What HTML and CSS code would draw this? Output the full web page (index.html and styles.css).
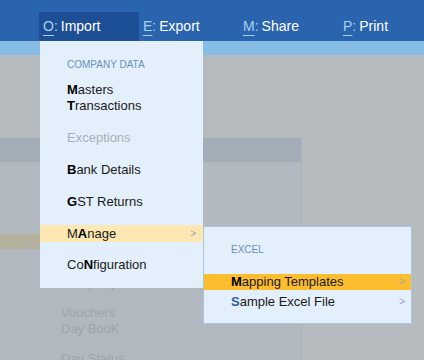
FILE: index.html
```html
<!DOCTYPE html>
<html lang="en">
<head>
    <meta charset="UTF-8">
    <meta name="viewport" content="width=device-width, initial-scale=1.0">
    <title>Import menu</title>
    <link rel="stylesheet" href="styles.css">
</head>
<body>
    <div class="topbar">
        <div class="tab active"><span class="key"><u>O</u>:</span>Import</div>
        <div class="tab"><span class="key"><u>E</u>:</span>Export</div>
        <div class="tab"><span class="key"><u>M</u>:</span>Share</div>
        <div class="tab"><span class="key"><u>P</u>:</span>Print</div>
    </div>
    <div class="strip"></div>

    <!-- pantalla de fondo (atenuada) -->
    <div class="screen">
        <div class="panel">
            <div class="panel-head"></div>
            <div class="panel-row"></div>
            <div class="panel-list">
                <div class="ghost">Company Data</div>
                <div class="ghost gap">Vouchers<br>Day BooK</div>
                <div class="ghost gap">Day Status</div>
            </div>
        </div>
    </div>

    <!-- menu Import -->
    <div class="menu main-menu">
        <div class="menu-title">COMPANY DATA</div>
        <div class="item"><b>M</b>asters<br><b>T</b>ransactions</div>
        <div class="item disabled">Exceptions</div>
        <div class="item"><b>B</b>ank Details</div>
        <div class="item"><b>G</b>ST Returns</div>
        <div class="item hover">M<b>A</b>nage <span class="chev">&gt;</span></div>
        <div class="item">Co<b>N</b>figuration</div>
    </div>

    <!-- submenu Manage -->
    <div class="menu sub-menu">
        <div class="menu-title">EXCEL</div>
        <div class="sub-items">
            <div class="item selected"><b>M</b>apping Templates <span class="chev">&gt;</span></div>
            <div class="item"><b class="blue">S</b>ample Excel File <span class="chev">&gt;</span></div>
        </div>
    </div>
</body>
</html>
```
FILE: styles.css
```css
* {
    font-family: 'Liberation Sans', Arial, sans-serif;
    box-sizing: border-box;
}
body {
    margin: 0;
    width: 424px;
    height: 360px;
    overflow: hidden;
    background-color: #b6bbc0;
    position: relative;
}

.topbar {
    display: flex;
    height: 41px;
    padding-left: 39px;
    background-color: #2b64ae;
    overflow: hidden;
}
.tab {
    flex: 0 0 100px;
    height: 29px;
    align-self: flex-end;
    padding-left: 4px;
    line-height: 28px;
    font-size: 14px;
    color: #ffffff;
}
.tab.active {
    background-color: #1d4f96;
}
.key {
    color: #a9cff2;
    margin-right: 3px;
}
.key u {
    text-underline-offset: 4px;
    text-decoration-thickness: 1px;
}
.strip {
    height: 14px;
    background-color: #87bce5;
}

.screen {
    display: flex;
    padding-top: 83px;
}
.panel {
    width: 302px;
    height: 222px;
    background-color: #b2b8bf;
    border-right: 1px solid #adb3ba;
}
.panel-head {
    height: 24px;
    background-color: #a3adb7;
}
.panel-row {
    height: 15px;
    margin-top: 72px;
    background-color: #b4b29f;
}
.panel-list {
    padding: 26px 0 0 61px;
}
.ghost {
    font-size: 13px;
    line-height: 16px;
    color: #9ea5ad;
}
.ghost.gap {
    margin-top: 14px;
}

.menu {
    position: absolute;
    background-color: #e3effa;
    font-size: 13px;
    color: #1a1a1a;
}
.main-menu {
    left: 40px;
    top: 41px;
    width: 163px;
    height: 247px;
    padding-top: 18px;
    display: flex;
    flex-direction: column;
    gap: 16px;
}
.sub-menu {
    left: 203px;
    top: 226px;
    width: 209px;
    height: 98px;
    padding-top: 17px;
    border: 1px solid #a8c6e4;
}
.menu-title {
    font-size: 10px;
    line-height: 12px;
    color: #6b91ba;
    padding-left: 27px;
}
.sub-menu .menu-title {
    margin-bottom: 18px;
}
.main-menu .menu-title {
    margin-bottom: -5px;
}
.item {
    position: relative;
    padding-left: 27px;
    line-height: 16px;
}
.item b {
    color: #000000;
}
.item.disabled {
    color: #a7afb7;
}
.item.hover {
    background-color: #fde7b3;
    line-height: 17px;
    margin: -1px 0 -1px;
}
.item.selected {
    background-color: #fcbd2f;
}
.sub-items .item + .item {
    margin-top: 4px;
}
.blue {
    color: #2a5ea8 !important;
}
.chev {
    position: absolute;
    right: 7px;
    top: 0;
    font-size: 10px;
    color: #9aa6b2;
}
.sub-menu .chev {
    right: 6px;
}
```
